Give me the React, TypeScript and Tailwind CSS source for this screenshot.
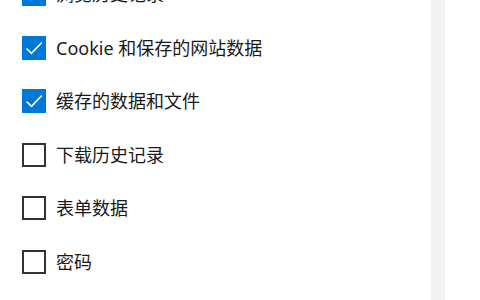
import React from "react";

const items: { label: string; checked: boolean }[] = [
  { label: "浏览历史记录", checked: true },
  { label: "Cookie 和保存的网站数据", checked: true },
  { label: "缓存的数据和文件", checked: true },
  { label: "下载历史记录", checked: false },
  { label: "表单数据", checked: false },
  { label: "密码", checked: false },
];

function Box({ checked }: { checked: boolean }) {
  if (checked) {
    return (
      <div className="w-[24px] h-[24px] shrink-0 bg-[#0078d7] flex items-center justify-center">
        <svg width="24" height="24" viewBox="0 0 24 24">
          <path d="M4.5 12.5 L9.5 17.3 L19.8 6.5" fill="none" stroke="#ffffff" strokeWidth="1.6" />
        </svg>
      </div>
    );
  }
  return <div className="w-[24px] h-[24px] shrink-0 border-2 border-[#333333] bg-white" />;
}

export default function App() {
  return (
    <div
      className="w-[480px] h-[300px] bg-white overflow-hidden flex"
      style={{ fontFamily: '"Noto Sans", "Noto Sans CJK SC", sans-serif' }}
    >
      <div className="w-[431px] shrink-0 overflow-hidden">
        <div className="flex flex-col pl-[22px] mt-[-18px]">
          {items.map((it) => (
            <div key={it.label} className="h-[53.6px] shrink-0 flex items-start">
              <div className="flex items-center gap-[10px] h-[24px]">
                <Box checked={it.checked} />
                <span className="text-[18px] leading-[24px] text-[#1a1a1a] whitespace-nowrap">{it.label}</span>
              </div>
            </div>
          ))}
        </div>
      </div>
      <div className="w-[14px] h-full bg-[#f2f2f2] shrink-0" />
      <div className="flex-1 bg-white" />
    </div>
  );
}
